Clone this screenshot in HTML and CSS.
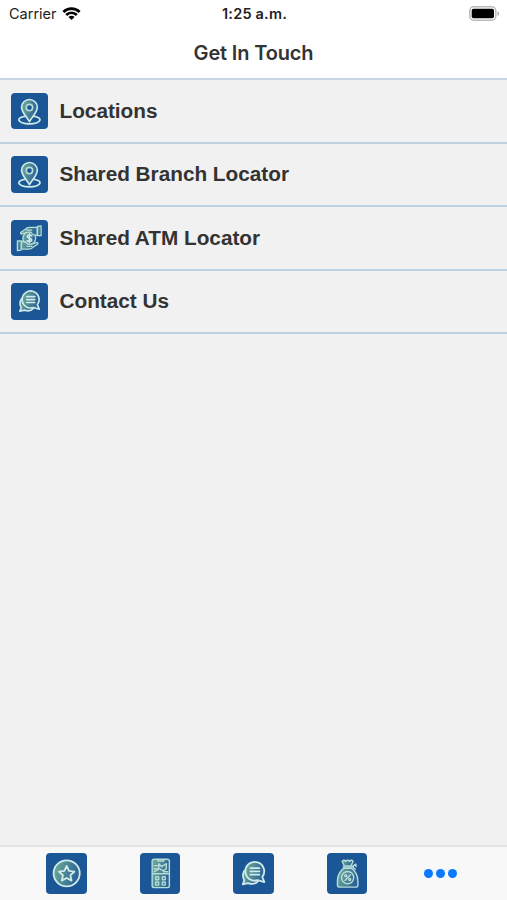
FILE: index.html
```html
<!DOCTYPE html>
<html lang="en">
<head>
  <meta charset="UTF-8" />
  <title>Get In Touch</title>
  <meta name="viewport" content="width=device-width, initial-scale=1.0">
  <link rel="stylesheet" href="styles.css">
</head>
<body>
  <!-- shared icons -->
  <svg class="sprite" width="0" height="0">
    <defs>
      <linearGradient id="mint" x1="0" y1="0" x2="1" y2="0.3">
        <stop offset="0" stop-color="#72b096" />
        <stop offset="1" stop-color="#2c6496" />
      </linearGradient>
    </defs>
    <symbol id="pin" viewBox="0 0 40 40">
      <ellipse class="bold" cx="20.2" cy="29.4" rx="11.6" ry="4.4" />
      <path class="bold" fill="url(#mint)" d="M20.2 31.5C18 26.5 11.6 21.8 11.6 15.700a8.600 8.600 0 0 1 17.200 0c0 6.100-6.400 10.800-8.600 15.800z" />
      <circle class="solid" cx="20.2" cy="16" r="3.5" />
    </symbol>
    <symbol id="hands" viewBox="0 0 40 40">
      <circle fill="url(#mint)" cx="20" cy="20" r="7" />
      <path class="bold" d="M22.8 17.3c-1.2-1.3-5-1.2-5 .8 0 2.4 5 1.4 5 3.8 0 2-3.8 2.2-5.2.7M20.2 15.2v9.6" />
      <path fill="url(#mint)" d="M28.7 8.2H20c-2 0-3.5 1-4.7 2.3l-4.4 3c-.9.8-.1 2.2 1.1 1.8l6.3-1.9h3.5c1.6 2.7 3.4 3.3 6.9 3.3z" />
      <path fill="url(#mint)" d="M29 7l4-.6v10.8h-4z" />
      <path fill="url(#mint)" d="M11.3 31.8H20c2 0 3.5-1 4.7-2.3l4.4-3c.9-.8.1-2.2-1.1-1.8l-6.3 1.9h-3.5c-1.6-2.7-3.4-3.3-6.9-3.3z" />
      <path fill="url(#mint)" d="M11 22.800H7v10.800l4-.6z" />
      <path d="M17 11.200h5.500M17.500 28.800H23" />
    </symbol>
    <symbol id="chat" viewBox="0 0 40 40">
      <path class="bold" fill="url(#mint)" d="M13.5 15.500c-3.800 2.500-4.700 7.700-2.300 11.300L9.700 31l5-1.300c4 1.400 8 .4 10-2z" />
      <path class="bold" fill="url(#mint)" d="M28.900 23.700a9.300 9.300 0 1 0-4.500 3.200l6.600 1.800z" />
      <path class="bold" d="M17.200 15h8.800M17.200 18.200h8.800M17.200 21.400h8.800" />
    </symbol>
    <symbol id="star" viewBox="0 0 40 40">
      <circle class="bold" fill="url(#mint)" cx="20.400" cy="20.100" r="12.900" />
      <path class="bold" d="M20.400 12.800l2.300 4.900 5.400.7-4 3.600 1.100 5.300-4.800-2.600-4.800 2.600 1.100-5.300-4-3.600 5.400-.7z" />
    </symbol>
    <symbol id="phone" viewBox="0 0 40 40">
      <rect fill="url(#mint)" x="12" y="6.200" width="17" height="28" rx="1.800" />
      <path d="M17.500 6.300v1.600h6V6.300M14 12.500h3.500M14 15.500h3M13 20.500h15.500M14 18.300l4-2M23 18.500h4.500" />
      <path d="M18.500 10.500l3 3 4.500-3v5l-3 2-4.500-2z" />
      <rect x="15.500" y="23.500" width="3" height="3" rx=".6" />
      <rect x="22" y="23.500" width="3" height="3" rx=".6" />
      <rect x="15.500" y="28.700" width="3" height="3" rx=".6" />
      <rect x="22" y="28.700" width="3" height="3" rx=".6" />
    </symbol>
    <symbol id="bag" viewBox="0 0 40 40">
      <path fill="url(#mint)" d="M16.800 15C12.500 18 10.300 22.500 10.300 28v3.500c0 1.400.9 2.200 2.200 2.200h15.800c1.300 0 2.200-.8 2.200-2.200V28c0-5.500-2.200-10-6.500-13z" />
      <path fill="url(#mint)" d="M17 12.700l-2-4.500c1.200-1.300 2.500-1.300 3.500.1 1.200-1.500 2.700-1.500 3.800 0 1-1.400 2.300-1.400 3.500-.1l-2 4.500z" />
      <path d="M16 13.800h10M25 13.500l3.500-2.500.2 2.300M25.500 14l2.500 2" />
      <circle cx="20.400" cy="24.300" r="6" />
      <path d="M23 21.500l-5.200 5.600" />
      <circle cx="18.500" cy="22.400" r="1" />
      <circle cx="22.400" cy="26.200" r="1" />
    </symbol>
  </svg>

  <div class="app">
    <div class="status-bar">
      <div class="carrier">
        Carrier
        <svg class="wifi" width="19" height="14" viewBox="0 0 20 15">
          <path d="M1.300 5.300C6.200.5 13.800.5 18.700 5.300M4.300 8.500c3.300-3.100 8.100-3.100 11.400 0" />
          <path class="dot" d="M10 14l-3.300-3.300c1.800-1.600 4.800-1.600 6.600 0z" />
        </svg>
      </div>
      <div class="time">1:25 a.m.</div>
      <svg class="battery" width="31" height="15" viewBox="0 0 31 15">
        <rect x=".8" y=".8" width="26" height="13.400" rx="4" fill="#fff" stroke="#b9b9b9" stroke-width="1.500" />
        <rect x="2.700" y="2.700" width="22.300" height="9.600" rx="1.800" />
        <path d="M28.500 5.200c2.200.8 2.200 3.800 0 4.600z" fill="#aaa" />
      </svg>
    </div>
    <div class="header">Get In Touch</div>

    <div class="list">
      <div class="row">
        <svg class="icon"><use href="#pin" /></svg>
        <span>Locations</span>
      </div>
      <div class="row">
        <svg class="icon"><use href="#pin" /></svg>
        <span>Shared Branch Locator</span>
      </div>
      <div class="row">
        <svg class="icon"><use href="#hands" /></svg>
        <span>Shared ATM Locator</span>
      </div>
      <div class="row">
        <svg class="icon"><use href="#chat" /></svg>
        <span>Contact Us</span>
      </div>
    </div>

    <div class="tab-bar">
      <div class="tab"><svg class="icon"><use href="#star" /></svg></div>
      <div class="tab"><svg class="icon"><use href="#phone" /></svg></div>
      <div class="tab"><svg class="icon"><use href="#chat" /></svg></div>
      <div class="tab"><svg class="icon"><use href="#bag" /></svg></div>
      <div class="tab more"><i></i><i></i><i></i></div>
    </div>
  </div>
</body>
</html>
```
FILE: styles.css
```css
body {
  margin: 0;
  background-color: #f1f1f1;
  font-family: "Inter", sans-serif;
  color: #333;
}

.sprite {
  position: absolute;
}

.app {
  display: flex;
  flex-direction: column;
  height: 100vh;
  overflow: hidden;
}

.status-bar {
  display: grid;
  grid-template-columns: 1fr auto 1fr;
  align-items: center;
  height: 27px;
  padding: 0 7px 0 9px;
  background-color: #fff;
  color: #222;
}

.carrier {
  display: flex;
  align-items: center;
  gap: 5px;
  font-size: 14.5px;
}

.wifi {
  fill: none;
  stroke: #000;
  stroke-width: 2.8;
}

.wifi .dot {
  fill: #000;
  stroke: none;
}

.time {
  font-size: 14.5px;
  font-weight: 600;
  letter-spacing: 0.2px;
}

.battery {
  justify-self: end;
}

.header {
  height: 51px;
  line-height: 52px;
  background-color: #fff;
  text-align: center;
  font-size: 20px;
  font-weight: 600;
  letter-spacing: -0.15px;
}

.list {
  flex: 1;
  border-top: 2px solid #c8d6e3;
}

.row {
  display: flex;
  align-items: center;
  gap: 12px;
  box-sizing: border-box;
  height: 63.5px;
  padding: 0 11px;
  border-bottom: 2px solid #bdd1e0;
  font-family: "Liberation Sans", sans-serif;
  font-size: 20.75px;
  font-weight: bold;
}

.icon {
  width: 36.5px;
  height: 36.5px;
  border-radius: 4px;
  background-color: #1b5796;
  fill: none;
  stroke: #b5dcd6;
  stroke-width: 1.4;
  stroke-linecap: round;
  stroke-linejoin: round;
}

.bold {
  stroke: #cfeaea;
  stroke-width: 1.8;
}

.solid {
  fill: #1b5796;
  stroke-width: 1.8;
}

.tab-bar {
  display: flex;
  box-sizing: border-box;
  height: 55px;
  padding: 0 20px;
  border-top: 2px solid #e2e2e2;
  background-color: #f8f8f8;
}

.tab {
  flex: 1;
  display: flex;
  align-items: center;
  justify-content: center;
}

.tab .icon {
  width: 40.5px;
  height: 40.5px;
}

.more {
  gap: 3px;
}

.more i {
  width: 9px;
  height: 9px;
  border-radius: 50%;
  background-color: #0a7aff;
}
```
